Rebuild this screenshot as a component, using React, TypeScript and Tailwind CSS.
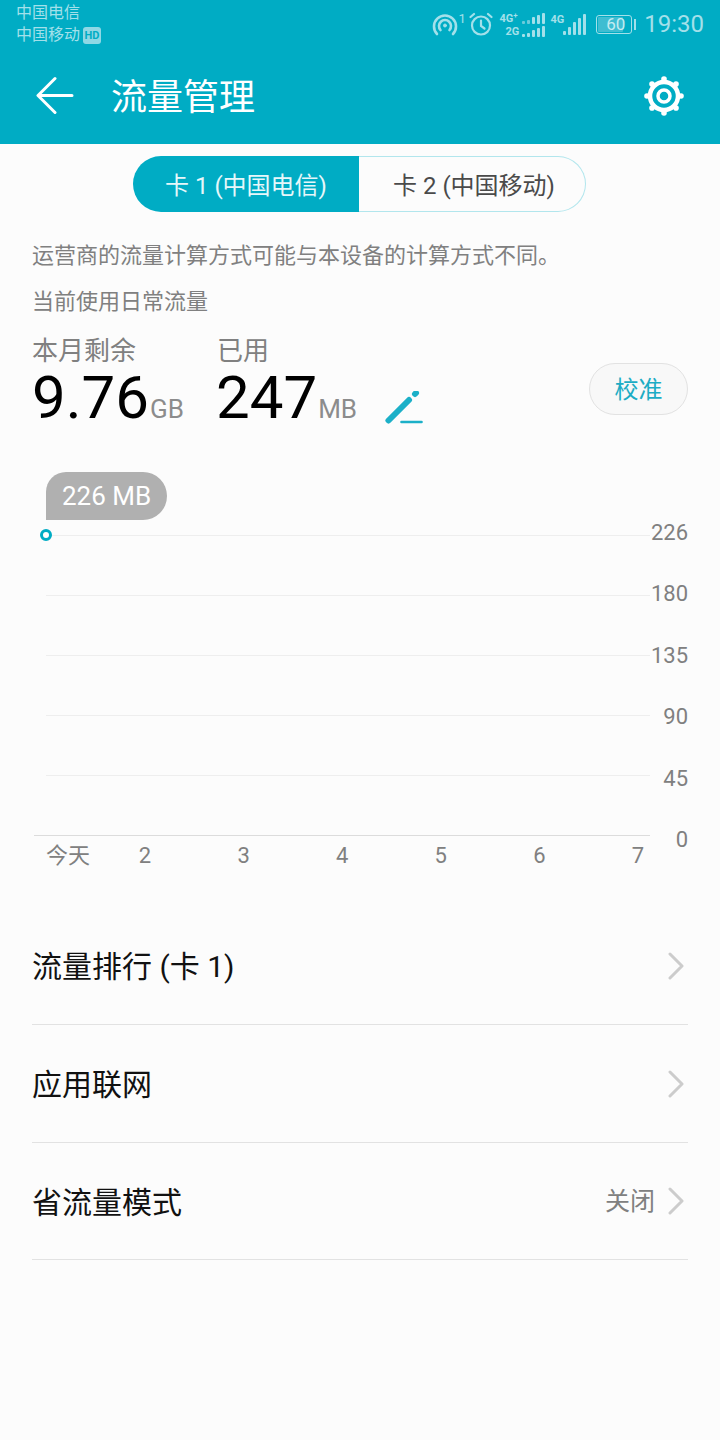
import React from "react";

const FONT = "font-['Roboto','Noto_Sans_CJK_SC',sans-serif]";

function Bars({ h, n, bar, dim = 0 }: { h: number; n: number; bar: number; dim?: number }) {
  return (
    <div className="flex items-end gap-[2px]">
      {Array.from({ length: n }).map((_, i) => {
        const height = Math.max(3, ((i + 1) / n) * h);
        return (
          <div
            key={i}
            className="rounded-[1px]"
            style={{ width: bar, height, backgroundColor: i < dim ? "#6ccbdb" : "#a3e0ea" }}
          />
        );
      })}
    </div>
  );
}

function Chevron() {
  return (
    <svg width="18" height="28" viewBox="0 0 18 28" fill="none" className="shrink-0">
      <path d="M3 2 L15 14 L3 26" stroke="#cccccc" strokeWidth="3" strokeLinecap="round" strokeLinejoin="round" />
    </svg>
  );
}

function StatusBar() {
  return (
    <div className="flex h-[48px] justify-between pl-[16px] pr-[16px] text-[#a3e0ea]">
      <div className="flex flex-col pt-[2px] text-[16px] leading-[22px]">
        <span>中国电信</span>
        <span className="flex items-center gap-[3px]">
          中国移动
          <span className="flex h-[17px] w-[18px] items-center justify-center rounded-[3px] bg-[#8fd8e5] text-[11px] font-bold leading-none text-[#00acc4]">HD</span>
        </span>
      </div>
      <div className="flex items-start pt-[12px]">
        <svg width="26" height="24" viewBox="0 0 26 24" fill="none" stroke="#a3e0ea" strokeWidth="2.6" strokeLinecap="round" className="mt-[1px]">
          <path d="M5 21 A11 11 0 1 1 21 21" />
          <path d="M8.5 17 A6 6 0 1 1 17.5 17" />
          <circle cx="13" cy="12.5" r="1.5" fill="#a3e0ea" strokeWidth="1" />
        </svg>
        <span className="ml-[0px] mt-[1px] w-[7px] text-[13px] leading-[11px]">1</span>
        <svg width="24" height="24" viewBox="0 0 24 24" fill="none" stroke="#a3e0ea" strokeWidth="2.2" strokeLinecap="round" className="ml-[4px]">
          <circle cx="12" cy="13.5" r="9" />
          <path d="M12 8.5 V14 L15.5 16.5" />
          <path d="M1.5 5 L5 2" />
          <path d="M22.5 5 L19 2" />
        </svg>
        <div className="ml-[6px] flex w-[46px] flex-col gap-[2px] pt-[1px]">
          <div className="flex h-[11px] items-end justify-between">
            <span className="text-[11px] font-bold leading-[11px]">4G<sup className="text-[8px] leading-none">+</sup></span>
            <Bars h={11} n={5} bar={3} dim={2} />
          </div>
          <div className="flex h-[11px] items-end justify-between">
            <span className="ml-[6px] text-[11px] font-bold leading-[11px]">2G</span>
            <Bars h={11} n={5} bar={3} />
          </div>
        </div>
        <span className="ml-[5px] mt-[2px] text-[11px] font-bold leading-[11px]">4G</span>
        <div className="ml-[-1px] mt-[1px] flex h-[22px] items-end">
          <Bars h={21} n={5} bar={3} />
        </div>
        <div className="ml-[10px] mt-[3px] flex items-center">
          <div className="flex h-[19px] w-[36px] items-center rounded-[3px] border border-[#a3e0ea] p-[1px]">
            <div className="flex h-full w-[25px] items-center rounded-[1px] bg-[#3fbdd1]">
              <span className="ml-[8px] text-[17px] leading-none text-[#c5ecf2]">60</span>
            </div>
          </div>
          <div className="ml-[2px] h-[11px] w-[2px] bg-[#a3e0ea]" />
        </div>
        <span className="ml-[8px] mt-[-1px] text-[24px] leading-[26px]">19:30</span>
      </div>
    </div>
  );
}

function Header() {
  return (
    <div className="h-[144px] bg-[#00acc4]">
      <StatusBar />
      <div className="flex h-[96px] items-center justify-between pl-[36px] pr-[36px] text-white">
        <div className="flex items-center">
          <svg width="40" height="40" viewBox="0 0 40 40" fill="none" stroke="white" strokeWidth="3" strokeLinecap="round" strokeLinejoin="round" className="shrink-0">
            <path d="M36 19.5 H3 M19 2.5 L2 19.5 L19 36.5" />
          </svg>
          <span className="ml-[35px] pt-[3px] text-[36px] leading-[44px]">流量管理</span>
        </div>
        <svg width="40" height="40" viewBox="0 0 40 40" fill="none" className="shrink-0">
          <circle cx="20" cy="20" r="14" stroke="white" strokeWidth="4.5" />
          <circle cx="20" cy="20" r="6" stroke="white" strokeWidth="3.5" />
          {[0, 45, 90, 135, 180, 225, 270, 315].map((a) => (
            <circle key={a} cx={20 + 17 * Math.cos((a * Math.PI) / 180)} cy={20 + 17 * Math.sin((a * Math.PI) / 180)} r="2.8" fill="white" />
          ))}
        </svg>
      </div>
    </div>
  );
}

function Tabs() {
  return (
    <div className="mt-[12px] ml-[133px] flex h-[56px] w-[453px] text-[24px]">
      <div className="flex w-[226px] items-center justify-center rounded-l-full bg-[#00acc4] pt-[3px] text-[#e6f7fa]">卡 1 (中国电信)</div>
      <div className="flex flex-1 items-center justify-center rounded-r-full border border-l-0 border-[#b2e6ed] pl-[4px] pt-[3px] text-[#4a4a4a]">卡 2 (中国移动)</div>
    </div>
  );
}

function Stats() {
  return (
    <div className="mt-[18px] flex items-start justify-between px-[32px]">
      <div className="flex">
        <div className="w-[185px]">
          <div className="pt-[1px] text-[26px] leading-[30px] text-[#808080]">本月剩余</div>
          <div className="mt-[2px] flex items-baseline">
            <span className="text-[60px] leading-[60px] text-black">9.76</span>
            <span className="ml-[1px] text-[26px] leading-[30px] text-[#8c8c8c]">GB</span>
          </div>
        </div>
        <div className="ml-[-1px]">
          <div className="pl-[1px] pt-[1px] text-[26px] leading-[30px] text-[#808080]">已用</div>
          <div className="mt-[2px] flex items-baseline">
            <span className="text-[60px] leading-[60px] text-black">247</span>
            <span className="ml-[1px] text-[26px] leading-[30px] text-[#8c8c8c]">MB</span>
            <svg width="38" height="36" viewBox="0 0 38 36" fill="none" stroke="#1cb0c8" strokeLinecap="round" className="mb-[1px] ml-[28px] self-end">
              <path d="M3.5 29.5 L24 9" strokeWidth="6" />
              <path d="M30 3 L31 2" strokeWidth="6" />
              <path d="M16.5 31 H36.5" strokeWidth="2.6" />
            </svg>
          </div>
        </div>
      </div>
      <div className="mt-[28px] flex h-[52px] w-[99px] items-center justify-center rounded-full border border-[#e2e2e2] bg-[#f8f8f8] pt-[1px] text-[24px] text-[#1cacc4]">校准</div>
    </div>
  );
}

function Chart() {
  const xs = ["2", "3", "4", "5", "6", "7"];
  const ys = ["226", "180", "135", "90", "45", "0"];
  return (
    <div className="mt-[44px] pl-[34px] pr-[32px] text-[22px] text-[#808080]">
      <div className="flex">
        <div className="w-[616px] shrink-0">
          <div className="ml-[12px] flex h-[48px] w-[121px] items-center justify-center rounded-r-[24px] rounded-tl-[20px] bg-[#b0b0b0] pt-[1px] text-[26px] text-white">226 MB</div>
          <div className="relative mt-[15px]">
            <div className="absolute left-[6px] top-[-6px] h-[12px] w-[12px] rounded-full border-[3px] border-[#00acc4] bg-white" />
            {[0, 1, 2, 3, 4].map((i) => (
              <div key={i} className="ml-[12px] h-[60px] border-t border-[#eeeeee]" />
            ))}
            <div className="border-t border-[#dcdcdc]" />
          </div>
          <div className="mt-[5px] flex pl-[12px] leading-[30px]">
            <div className="w-[49.7px] shrink-0">今天</div>
            {xs.map((x) => (
              <div key={x} className="w-[98.6px] shrink-0 text-center">{x}</div>
            ))}
          </div>
        </div>
        <div className="flex h-[383px] flex-1 flex-col justify-between pt-[46px] text-right leading-[30px]">
          {ys.map((y) => (
            <div key={y}>{y}</div>
          ))}
        </div>
      </div>
    </div>
  );
}

function Row({ label, value, h }: { label: string; value?: string; h: string }) {
  return (
    <div className={`flex items-center justify-between border-b border-[#e2e2e2] pr-[3px] ${h}`}>
      <span className="pt-[2px] text-[30px] text-[#111111]">{label}</span>
      <div className="flex items-center gap-[12px]">
        {value && <span className="pt-[2px] text-[25px] text-[#808080]">{value}</span>}
        <Chevron />
      </div>
    </div>
  );
}

export default function App() {
  return (
    <div className={`${FONT} h-[1440px] w-[720px] overflow-hidden bg-[#fcfcfc]`}>
      <Header />
      <Tabs />
      <div className="mt-[29px] px-[32px] text-[22px] leading-[30px] text-[#808080]">运营商的流量计算方式可能与本设备的计算方式不同。</div>
      <div className="mt-[16px] px-[32px] text-[22px] leading-[30px] text-[#808080]">当前使用日常流量</div>
      <Stats />
      <Chart />
      <div className="mt-[36px] px-[32px]">
        <Row label="流量排行 (卡 1)" h="h-[118px]" />
        <Row label="应用联网" h="h-[118px]" />
        <Row label="省流量模式" value="关闭" h="h-[117px]" />
      </div>
    </div>
  );
}
